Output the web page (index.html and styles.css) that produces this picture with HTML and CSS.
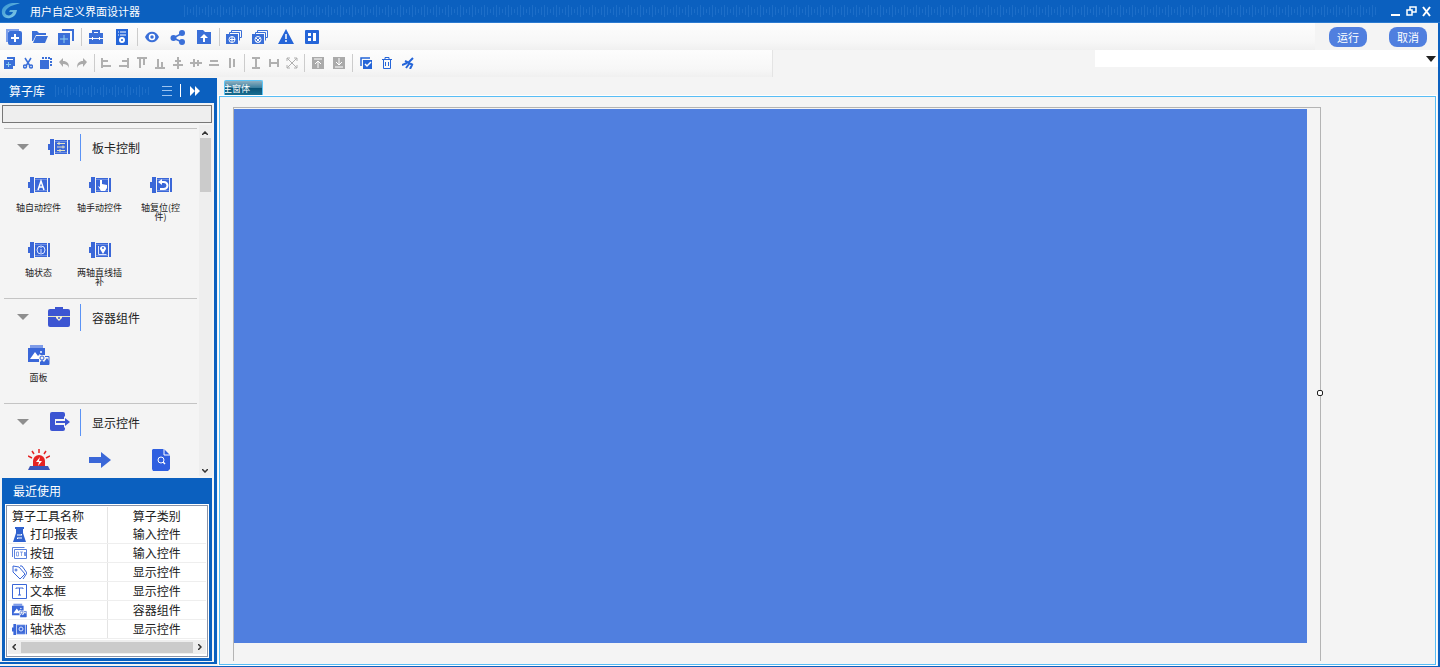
FILE: index.html
```html
<!DOCTYPE html>
<html lang="zh-CN">
<head>
  <meta charset="UTF-8" />
  <meta name="viewport" content="width=device-width, initial-scale=1.0" />
  <title>用户自定义界面设计器</title>
  <link rel="stylesheet" href="styles.css">
</head>
<body>
  <!-- shared icons -->
  <svg class="defs" width="0" height="0" aria-hidden="true">
    <defs>
      <pattern id="wave" width="12" height="12" patternUnits="userSpaceOnUse">
        <path d="M1.500 0v12M4.500 2v8M7.500 4v4M10.500 2v8" stroke="#2a78cf" stroke-width="1" />
      </pattern>
      <linearGradient id="logoFill" x1="0" y1="0" x2="1" y2="1">
        <stop offset="0" stop-color="#2f8fd0" />
        <stop offset="1" stop-color="#8fd3ea" />
      </linearGradient>
    </defs>
    <symbol id="axis" viewBox="0 0 22 18">
      <path d="M0 6h2V1h4v16H2v-5H0zM7 2h12v14H7zM20 2h2v14h-2z" fill="#3a67d8" />
      <path d="M7 3.500h12M7 14.500h12" stroke="#6c8de4" stroke-width="1" />
    </symbol>
    <symbol id="panel" viewBox="0 0 22 20">
      <path d="M2 0h13v3H2z" fill="#7f9ce8" />
      <path d="M0 3h17v14H0z" fill="#3a67d8" />
      <path d="M2 14l5-7 3 4 2-2 2 5z" fill="#fff" />
      <circle cx="13" cy="7" r="1" fill="#fff" />
      <path d="M11 10h11v10H11z" fill="#f4f4f4" />
      <path d="M12 17l2-2 2 2 3-4 2 3v4h-9z" fill="#3a67d8" />
      <circle cx="14" cy="13" r="2" fill="none" stroke="#3a67d8" />
      <path d="M17 11.500h4v8" fill="none" stroke="#3a67d8" />
    </symbol>
  </svg>

  <header class="titlebar">
    <svg class="logo" width="20" height="16" viewBox="0 0 20 16">
      <path d="M19 0C11-1 3 1 1 7c-1 6 3 9 8 8 4-1 6-3 7-8H9L8 9h4c-1 3-4 4-6 3-3-1-2-5 1-7 3-3 7-3 12-5z" fill="url(#logoFill)" />
    </svg>
    <h1>用户自定义界面设计器</h1>
    <svg class="wave" height="12"><rect width="100%" height="12" fill="url(#wave)" /></svg>
    <div class="window-buttons">
      <button aria-label="最小化"><svg width="10" height="12"><path d="M0 9h9v2H0z" fill="#fff" /></svg></button>
      <button aria-label="还原"><svg width="11" height="12" fill="none" stroke="#fff" stroke-width="1.5"><path d="M1 5h5v5H1zM4 5V2h6v5H6" /></svg></button>
      <button aria-label="关闭"><svg width="10" height="12" fill="none" stroke="#fff" stroke-width="2"><path d="M1 2l7 9M8 2l-7 9" /></svg></button>
    </div>
  </header>

  <div class="toolbar main-toolbar">
    <div class="tools">
      <button aria-label="新建"><svg width="16" height="16"><path d="M1 13V1h12" fill="none" stroke="#7fa0ea" stroke-width="2" /><rect x="2" y="2" width="14" height="14" rx="2" fill="#3a6fd8" /><path d="M9 5v8M5 9h8" stroke="#fff" stroke-width="2" /></svg></button>
      <button aria-label="打开"><svg width="16" height="16" fill="#3a6fd8"><path d="M0 2h5l2 2h7v2H4L1 12H0z" /><path d="M4 7h12l-3 7H1z" /></svg></button>
      <button aria-label="另存"><svg width="16" height="16"><path d="M4 1h11v11" fill="none" stroke="#3a6fd8" stroke-width="2" /><path d="M0 4h12v12H0z" fill="#3a6fd8" /><path d="M6 6v8M2 10h8" stroke="#8fd0ee" /></svg></button>
      <span class="sep"></span>
      <button aria-label="工具箱"><svg width="14" height="16"><path d="M4 4V2h6v2" fill="none" stroke="#3a6fd8" stroke-width="2" /><path d="M0 4h14v5H0zM0 10h14v5H0z" fill="#3a6fd8" /><path d="M3.500 8v3M10.500 8v3" stroke="#fff" /></svg></button>
      <button aria-label="配置"><svg width="14" height="16"><path d="M1 0h12v16H1z" fill="#2565d8" /><path d="M3 3h1M5 3h6M3 6h1M5 6h6" stroke="#fff" /><circle cx="7" cy="11" r="2" fill="none" stroke="#fff" stroke-width="2" /></svg></button>
      <span class="sep"></span>
      <button aria-label="预览"><svg width="14" height="16"><path d="M0 8c3-7 11-7 14 0-3 7-11 7-14 0z" fill="#3a6fd8" /><circle cx="7" cy="8" r="2.500" fill="none" stroke="#fff" stroke-width="1.5" /></svg></button>
      <button aria-label="共享"><svg width="16" height="16"><path d="M3 9l10-5M3 9l9 4" stroke="#3a6fd8" stroke-width="1.5" /><g fill="#3a6fd8"><circle cx="3.5" cy="9" r="3" /><circle cx="12" cy="4" r="3" /><circle cx="12" cy="13" r="3" /></g></svg></button>
      <button aria-label="导入"><svg width="14" height="16"><path d="M0 1h6l2 2h6v12H0z" fill="#3a6fd8" /><path d="M7 5l4 4H8v4H6V9H3z" fill="#fff" /></svg></button>
      <span class="sep"></span>
      <button aria-label="添加窗体"><svg width="16" height="16"><path d="M5.500 3V1.500h10v7H13M3.500 5V3.500h10v8" fill="none" stroke="#3a6fd8" /><path d="M0 5h12v10H0z" fill="#3a6fd8" /><circle cx="6" cy="10.500" r="3" fill="none" stroke="#fff" /><path d="M6 8v5M4 10.500h5" stroke="#fff" /></svg></button>
      <button aria-label="删除窗体"><svg width="16" height="16"><path d="M5.500 3V1.500h10v7H13M3.500 5V3.500h10v8" fill="none" stroke="#3a6fd8" /><path d="M0 5h12v10H0z" fill="#3a6fd8" /><circle cx="6" cy="10.500" r="3" fill="none" stroke="#fff" /><path d="M4 9l4 4M8 9l-4 4" stroke="#fff" /></svg></button>
      <button aria-label="警告"><svg width="16" height="16"><path d="M8 0l8 15H0z" fill="#2565d8" /><path d="M8 5v5M8 11v2" stroke="#fff" stroke-width="1.5" /></svg></button>
      <button aria-label="布局"><svg width="14" height="16"><rect y="1" width="14" height="14" rx="1" fill="#2565d8" /><path d="M3 4h3v3H3zM3 9h3v3H3zM8 4h3v8H8z" fill="#fff" /></svg></button>
    </div>
    <div class="actions">
      <button class="pill">运行</button>
      <button class="pill">取消</button>
    </div>
  </div>

  <div class="toolbar edit-toolbar">
    <div class="tools small">
      <button aria-label="复制"><svg width="12" height="12"><path d="M3 1h7v8" fill="none" stroke="#3a6fd8" stroke-width="2" /><path d="M0 3h9v9H0z" fill="#3a6fd8" /><path d="M4.500 5v5M2 7.500h5" stroke="#8fd0ee" /></svg></button>
      <button aria-label="剪切"><svg width="10" height="12" fill="none" stroke="#3a6fd8" stroke-width="1.5"><path d="M2 1l5 8M8 1L3 9" /><circle cx="2" cy="9.500" r="1.500" /><circle cx="8" cy="9.500" r="1.500" /></svg></button>
      <button aria-label="粘贴"><svg width="12" height="12"><path d="M2 1h9v9" fill="none" stroke="#3a6fd8" stroke-width="2" stroke-dasharray="2 1" /><path d="M0 3h9v9H0z" fill="#3a6fd8" /></svg></button>
      <button aria-label="撤销"><svg width="10" height="12" fill="#aaa"><path d="M0 5l4-4v3c4 0 6 2 6 7-1-3-3-4-6-4v3z" /></svg></button>
      <button aria-label="重做"><svg width="10" height="12" fill="#aaa"><path d="M10 5L6 1v3c-4 0-6 2-6 7 1-3 3-4 6-4v3z" /></svg></button>
      <span class="sep"></span>
      <button aria-label="左对齐"><svg class="grey" width="10" height="12"><path d="M1 1v10M2 4h5M2 9h8" /></svg></button>
      <button aria-label="右对齐"><svg class="grey" width="10" height="12"><path d="M9 1v10M8 4H3M8 9H0" /></svg></button>
      <button aria-label="顶对齐"><svg class="grey" width="10" height="12"><path d="M0 1h10M3 2v9M7 2v6" /></svg></button>
      <button aria-label="底对齐"><svg class="grey" width="10" height="12"><path d="M0 11h10M3 10V2M7 10V5" /></svg></button>
      <button aria-label="水平居中"><svg class="grey" width="10" height="12"><path d="M5 0v12M2 4h6M0 8h10" /></svg></button>
      <button aria-label="垂直居中"><svg class="grey" width="12" height="12"><path d="M0 6h12M4 2v8M8 3v6" /></svg></button>
      <button aria-label="等高"><svg class="grey" width="10" height="12"><path d="M1 4h8M0 8h10" /></svg></button>
      <button aria-label="等宽"><svg class="grey" width="10" height="12"><path d="M3 1v10M7 2v8" /></svg></button>
      <span class="sep"></span>
      <button aria-label="高度"><svg class="grey" width="10" height="12"><path d="M1 1h8M5 1v10M1 11h8" /></svg></button>
      <button aria-label="宽度"><svg class="grey" width="10" height="12"><path d="M1 2v8M1 6h8M9 2v8" /></svg></button>
      <button aria-label="缩放"><svg class="grey thin" width="12" height="12"><path d="M1 1l10 10M11 1L1 11M1 4V1h3M8 1h3v3M1 8v3h3M8 11h3V8" /></svg></button>
      <span class="sep"></span>
      <button class="wide" aria-label="置顶"><svg width="12" height="12"><path d="M0 0h12v12H0z" fill="#aaa" /><path d="M2 2h8M6 11V4M3 7l3-3 3 3" fill="none" stroke="#fff" /></svg></button>
      <button class="wide" aria-label="置底"><svg width="12" height="12"><path d="M0 0h12v12H0z" fill="#aaa" /><path d="M2 10h8M6 1v7M3 5l3 3 3-3" fill="none" stroke="#fff" /></svg></button>
      <span class="sep"></span>
      <button class="wide" aria-label="全选"><svg width="12" height="12"><path d="M1 9V1h9" fill="none" stroke="#2565d8" stroke-width="1.500" /><path d="M3 3h9v9H3z" fill="#2565d8" /><path d="M5 7l2 2 4-4" fill="none" stroke="#fff" stroke-width="1.5" /></svg></button>
      <button class="wide" aria-label="删除"><svg width="12" height="12" fill="none" stroke="#2565d8"><path d="M1 2.500h10M4 2V.5h4V2M2.500 3v8.500h7V3M4.500 5v4M7.500 5v4" /></svg></button>
      <button class="wide" aria-label="清空"><svg width="12" height="12" fill="none" stroke="#2565d8" stroke-width="2"><path d="M11 1L7 5M3 4l8 4M5 6L0 8M7 7l-3 4M10 8l-2 4" /></svg></button>
    </div>
    <label class="picker">
      <select aria-label="选择控件"><option></option></select>
      <svg width="10" height="6"><path d="M0 0h10L5 6z" fill="#222" /></svg>
    </label>
  </div>

  <main class="workspace">
    <aside class="sidebar">
      <div class="sidebar-head">
        <h2>算子库</h2>
        <svg class="wave" height="12"><rect width="100%" height="12" fill="url(#wave)" /></svg>
        <button aria-label="列表"><svg width="10" height="12" stroke="#9cc4f0" stroke-width="1"><path d="M0 1.500h10M0 5.500h10M0 10.500h10" /></svg></button>
        <span class="divider"></span>
        <button aria-label="展开"><svg width="10" height="12" fill="#fff"><path d="M0 1l5 5-5 5zM5 1l5 5-5 5z" /></svg></button>
      </div>
      <input class="search" type="text" aria-label="搜索算子">

      <div class="library">
        <div class="groups">
          <section class="group">
            <div class="group-head">
              <svg class="caret" width="12" height="6"><path d="M0 0h12L6 6z" /></svg>
              <svg width="22" height="18"><use href="#axis" width="22" height="18" /><path d="M9 5.500h8M9 9h8M9 12.500h8M11 4v3M15 7.500v3M12 11v3" stroke="#e6e3c0" /></svg>
              <h3>板卡控制</h3>
            </div>
            <div class="items">
              <div class="item">
                <div class="icon"><svg width="22" height="18"><use href="#axis" width="22" height="18" /><path d="M10 14l3-9 3 9M11 11h4" fill="none" stroke="#fff" stroke-width="1.5" /></svg></div>
                <span>轴自动控件</span>
              </div>
              <div class="item">
                <div class="icon"><svg width="22" height="18"><use href="#axis" width="22" height="18" /><path d="M11 4h2v4l5 1v3l-2 3h-4L9 10l2 1z" fill="#fff" /></svg></div>
                <span>轴手动控件</span>
              </div>
              <div class="item">
                <div class="icon"><svg width="22" height="18"><use href="#axis" width="22" height="18" /><path d="M11 6h3a3 3 0 010 7h-4" fill="none" stroke="#fff" stroke-width="2" /><path d="M8 6l4-3v6z" fill="#fff" /></svg></div>
                <span>轴复位(控件)</span>
              </div>
              <div class="item">
                <div class="icon"><svg width="22" height="18"><use href="#axis" width="22" height="18" /><circle cx="13" cy="9" r="4" fill="none" stroke="#dce5ff" /><path d="M13 6v1M13 8v4" stroke="#dce5ff" /></svg></div>
                <span>轴状态</span>
              </div>
              <div class="item">
                <div class="icon"><svg width="22" height="18"><use href="#axis" width="22" height="18" /><path d="M9.500 5v8.500h8" fill="none" stroke="#dce5ff" /><path d="M14 13l-3-5a3 3 0 116 0z" fill="#fff" /><circle cx="14" cy="7" r="1" fill="#3a67d8" /></svg></div>
                <span>两轴直线插补</span>
              </div>
            </div>
          </section>

          <section class="group">
            <div class="group-head">
              <svg class="caret" width="12" height="6"><path d="M0 0h12L6 6z" /></svg>
              <svg width="22" height="22"><path d="M8 4V2h6v2" fill="none" stroke="#3c55d2" stroke-width="2" /><rect y="3" width="22" height="18" rx="2" fill="#3c55d2" /><path d="M0 10.500h8M14 10.500h8" stroke="#e8e6c0" /><path d="M8 10h6v2l-3 3-3-3z" fill="#f4f0d0" /><circle cx="11" cy="12" r="1" fill="#3c55d2" /></svg>
              <h3>容器组件</h3>
            </div>
            <div class="items">
              <div class="item">
                <div class="icon"><svg width="22" height="20"><use href="#panel" width="22" height="20" /></svg></div>
                <span>面板</span>
              </div>
            </div>
          </section>

          <section class="group">
            <div class="group-head">
              <svg class="caret" width="12" height="6"><path d="M0 0h12L6 6z" /></svg>
              <svg width="22" height="22"><rect x="2" y="1" width="15" height="19" rx="2" fill="#3c55d2" /><path d="M7 8h9V5l6 6-6 6v-3H7z" fill="#f4f4f4" /><path d="M8 10h9V7l5 4-5 4v-3H8z" fill="#3c55d2" /></svg>
              <h3>显示控件</h3>
            </div>
            <div class="items">
              <div class="item">
                <div class="icon"><svg width="22" height="22"><path d="M5 17v-5a6 6 0 0112 0v5z" fill="#e52222" /><path d="M11 0v4M4 2l2 3M18 2l-2 3M0 7l4 2M22 7l-4 2" stroke="#e52222" stroke-width="1.500" /><path d="M12 8l-4 5h3l-1 4 4-5h-3z" fill="#fff" /><path d="M2 17h18l2 4H0z" fill="#3c55b8" /></svg></div>
                <span></span>
              </div>
              <div class="item">
                <div class="icon"><svg width="22" height="22"><path d="M0 8h12V3l10 8-10 8v-5H0z" fill="#3a67d8" /></svg></div>
                <span></span>
              </div>
              <div class="item">
                <div class="icon"><svg width="20" height="22"><path d="M2 0h11l6 6v14l-2 2H2l-1-2V1z" fill="#2f5fe0" /><path d="M13 0v6h6" fill="none" stroke="#fff" /><circle cx="10" cy="11" r="3" fill="none" stroke="#fff" /><path d="M12 13l2 2" stroke="#fff" stroke-width="1.500" /></svg></div>
                <span></span>
              </div>
            </div>
          </section>
        </div>
        <div class="vscroll">
          <svg width="6" height="4"><path d="M0 4l3-3 3 3" /></svg>
          <div class="thumb"></div>
          <svg width="6" height="4"><path d="M0 0l3 3 3-3" /></svg>
        </div>
      </div>

      <section class="recent">
        <h2>最近使用</h2>
        <div class="recent-box">
          <table>
            <thead>
              <tr><th>算子工具名称</th><th>算子类别</th></tr>
            </thead>
            <tbody>
              <tr>
                <td><div class="tool"><svg width="15" height="15"><path d="M3 0h9v2h-1v4l3 9H1l3-9V2H3z" fill="#2f62cf" /><path d="M5 8h5l-1-1M10 11H5l1 1" fill="none" stroke="#fff" /></svg>打印报表</div></td>
                <td>输入控件</td>
              </tr>
              <tr>
                <td><div class="tool"><svg width="15" height="15" fill="none" stroke="#5b82dc"><path d="M.5 11V1.500h12M2.500 3.500h12v9h-12z" /><path d="M4.500 6v4h2V6zM8 6h3M9.500 6v4M12.500 10V6l1 4V6" stroke-width=".7" /></svg>按钮</div></td>
                <td>输入控件</td>
              </tr>
              <tr>
                <td><div class="tool"><svg width="15" height="15" fill="none" stroke="#3a67d8"><path d="M1 1l6 1 6 7-5 5-7-7zM8 1h2l5 7-4 6" /><circle cx="4" cy="5" r="1" /></svg>标签</div></td>
                <td>显示控件</td>
              </tr>
              <tr>
                <td><div class="tool"><svg width="15" height="15" fill="none" stroke="#3a67d8"><path d="M.5 .5h14v14H.5z" /><path d="M4 5V4h7v1M7.500 4v7M6 11h3" /></svg>文本框</div></td>
                <td>显示控件</td>
              </tr>
              <tr>
                <td><div class="tool"><svg width="15" height="15"><use href="#panel" width="15" height="15" /></svg>面板</div></td>
                <td>容器组件</td>
              </tr>
              <tr>
                <td><div class="tool"><svg width="15" height="15"><use href="#axis" width="15" height="15" /><circle cx="9" cy="7" r="2" fill="none" stroke="#dce5ff" /></svg>轴状态</div></td>
                <td>显示控件</td>
              </tr>
            </tbody>
          </table>
          <div class="hscroll">
            <svg width="4" height="6"><path d="M4 0L1 3l3 3" /></svg>
            <div class="thumb"></div>
            <svg width="4" height="6"><path d="M0 0l3 3-3 3" /></svg>
          </div>
        </div>
      </section>
    </aside>

    <section class="designer">
      <div class="tabs"><button class="tab">主窗体</button></div>
      <div class="canvas">
        <div class="form">
          <div class="form-panel"></div>
          <span class="handle"></span>
        </div>
      </div>
    </section>
  </main>
</body>
</html>
```
FILE: styles.css
```css
* {
  box-sizing: border-box;
}

body {
  font-family: "Noto Sans CJK SC", "Liberation Sans", sans-serif;
  background: #f4f4f4;
  color: #222;
  margin: 0;
  height: 100vh;
  display: flex;
  flex-direction: column;
  overflow: hidden;
}

h1, h2, h3 {
  margin: 0;
  font-weight: 400;
}

button {
  border: none;
  background: none;
  padding: 0;
  margin: 0;
  font-family: inherit;
  cursor: pointer;
}

svg {
  display: block;
  flex: none;
}

.defs {
  position: absolute;
}

/* title bar */
.titlebar {
  flex: none;
  height: 23px;
  display: flex;
  align-items: center;
  padding: 0 8px 0 1px;
  background: #0b60bf;
  border-bottom: 1px solid #2b7ad0;
  color: #fff;
}

.titlebar h1 {
  font-size: 11px;
  margin-left: 9px;
}

.wave {
  flex: 1;
  min-width: 0;
  opacity: 0.6;
}

.titlebar .wave {
  margin: 0 13px 0 43px;
}

.window-buttons {
  display: flex;
  gap: 5px;
}

/* toolbars */
.toolbar {
  flex: none;
  height: 27px;
  display: flex;
  border-right: 2px solid #0b60bf;
}

.tools {
  flex: 1;
  display: flex;
  align-items: center;
  padding-left: 1px;
  background: linear-gradient(#fdfdfd, #f7f7f7 70%, #f0f0f0);
}

.tools button {
  width: 26px;
  display: flex;
  justify-content: center;
}

.tools .sep {
  width: 4px;
  height: 18px;
  display: flex;
  justify-content: center;
}

.tools .sep::before {
  content: "";
  width: 1px;
  background: #ccc;
}

.tools.small {
  padding-bottom: 1px;
}

.tools.small button {
  width: 18px;
}

.tools.small .wide {
  width: 21px;
}

.tools.small .sep {
  width: 6px;
}

.grey {
  fill: none;
  stroke: #b0b0b0;
  stroke-width: 2;
}

.grey.thin {
  stroke-width: 1;
}

.actions {
  display: flex;
  align-items: center;
  gap: 22px;
  padding: 1px 11px 0 14px;
}

.pill {
  width: 38px;
  height: 20px;
  border-radius: 8px;
  background: #507fdf;
  color: #fff;
  font-size: 11px;
  line-height: 18px;
}

.edit-toolbar .tools {
  margin-right: 322px;
  border-right: 1px solid #e4e4e4;
}

.picker {
  width: 343px;
  height: 17px;
  display: flex;
  align-items: center;
  padding-right: 2px;
  background: #fff;
}

.picker select {
  flex: 1;
  height: 17px;
  appearance: none;
  border: none;
  background: transparent;
}

/* workspace */
.workspace {
  flex: 1;
  min-height: 0;
  display: flex;
  border-right: 2px solid #0b60bf;
  border-bottom: 1px solid #0b60bf;
}

.sidebar {
  width: 217px;
  flex: none;
  display: flex;
  flex-direction: column;
  margin: 1px 0 2px;
  border-right: 3px solid #0b60bf;
  border-bottom: 2px solid #0b60bf;
  padding-bottom: 1px;
}

.sidebar-head {
  height: 25px;
  flex: none;
  display: flex;
  align-items: center;
  padding: 0 14px 0 9px;
  background: #0b60bf;
  color: #fff;
}

.sidebar-head h2 {
  font-size: 12px;
}

.sidebar-head .wave {
  margin: 0 12px 0 9px;
}

.divider {
  width: 1px;
  height: 13px;
  margin: 0 9px 0 8px;
  background: #fff;
}

.search {
  height: 18px;
  flex: none;
  margin: 2px 2px 0;
  border: 1px solid #777;
  background: #eee;
  outline: none;
}

.library {
  flex: 1;
  min-height: 0;
  display: flex;
  margin-right: 2px;
  padding: 2px 0;
}

.groups {
  flex: 1;
  min-width: 0;
  overflow: hidden;
  padding: 3px 2px 0 4px;
}

.group {
  border-top: 1px solid #c4c4c4;
  padding-bottom: 3px;
}

.group-head {
  height: 36px;
  display: flex;
  align-items: center;
  padding-left: 13px;
}

.caret {
  fill: #8e8e8e;
  margin-right: 19px;
}

.group-head h3 {
  font-size: 12px;
  line-height: 27px;
  margin-left: 10px;
  padding-left: 11px;
  border-left: 1px solid #5b93f5;
}

.items {
  display: grid;
  grid-template-columns: repeat(3, 61px);
  grid-auto-rows: 65px;
  margin-left: 4px;
}

.item {
  text-align: center;
  padding: 9px 6px 0;
  font-size: 9px;
  line-height: 9px;
}

.item .icon {
  height: 22px;
  margin-bottom: 7px;
  display: flex;
  align-items: center;
  justify-content: center;
}

.item span {
  display: block;
}

.vscroll {
  width: 13px;
  display: flex;
  flex-direction: column;
  align-items: center;
  padding: 6px 1px 3px 0;
  background: #eee;
}

.vscroll svg,
.hscroll svg {
  fill: none;
  stroke: #333;
  stroke-width: 1.5;
}

.vscroll .thumb {
  width: 11px;
  height: 54px;
  margin: 3px 0 auto;
  background: #cbcbcb;
}

/* recently used */
.recent {
  flex: none;
  margin: 0 2px;
  padding: 0 3px 2px;
  background: #0b60bf;
}

.recent h2 {
  color: #fff;
  font-size: 12px;
  line-height: 25px;
  padding-left: 8px;
}

.recent-box {
  border: 1px solid #8a94a8;
  outline: 1px solid #fff;
  background: #fff;
  margin: 2px 1px;
  padding: 1px 1px 2px;
}

.recent table {
  width: 100%;
  border-collapse: collapse;
  table-layout: fixed;
  font-size: 12px;
  line-height: 18px;
}

.recent th,
.recent td {
  padding: 0;
  text-align: center;
  font-weight: 400;
  border-bottom: 1px solid #eee;
}

.recent th {
  border-bottom: none;
}

.recent th:first-child,
.recent td:first-child {
  text-align: left;
  padding-left: 4px;
  border-right: 1px solid #e4e4e4;
}

.tool {
  display: flex;
  align-items: center;
  gap: 3px;
}

.hscroll {
  height: 14px;
  display: flex;
  align-items: center;
  gap: 5px;
  margin-top: 1px;
  padding: 0 4px;
  background: #eee;
}

.hscroll .thumb {
  flex: 1;
  height: 11px;
  background: #cbcbcb;
}

/* designer */
.designer {
  flex: 1;
  min-width: 0;
  display: flex;
  flex-direction: column;
  padding: 3px 2px 1px;
}

.tabs {
  display: flex;
  padding-left: 5px;
}

.tab {
  width: 39px;
  height: 16px;
  overflow: hidden;
  border: 1px solid #5cc4f5;
  border-bottom: none;
  border-radius: 2px 2px 0 0;
  background: linear-gradient(#8fb0c0, #3a7f9f 45%, #0a5478 50%, #1a7296);
  color: #fff;
  font-size: 9px;
  line-height: 14px;
  text-align: left;
  text-indent: -2px;
}

.canvas {
  flex: 1;
  display: flex;
  border: 1px solid #58bdf5;
  outline: 1px solid #fff;
  padding: 10px 114px 3px 13px;
}

.form {
  flex: 1;
  display: flex;
  position: relative;
  border: 1px solid #b4b4b4;
  border-bottom: none;
  padding: 1px 13px 18px 0;
}

.form-panel {
  flex: 1;
  background: #507fdf;
}

.handle {
  position: absolute;
  right: -3px;
  top: 51%;
  width: 6px;
  height: 6px;
  border: 1px solid #222;
  border-radius: 2px;
  background: #fff;
}
```
